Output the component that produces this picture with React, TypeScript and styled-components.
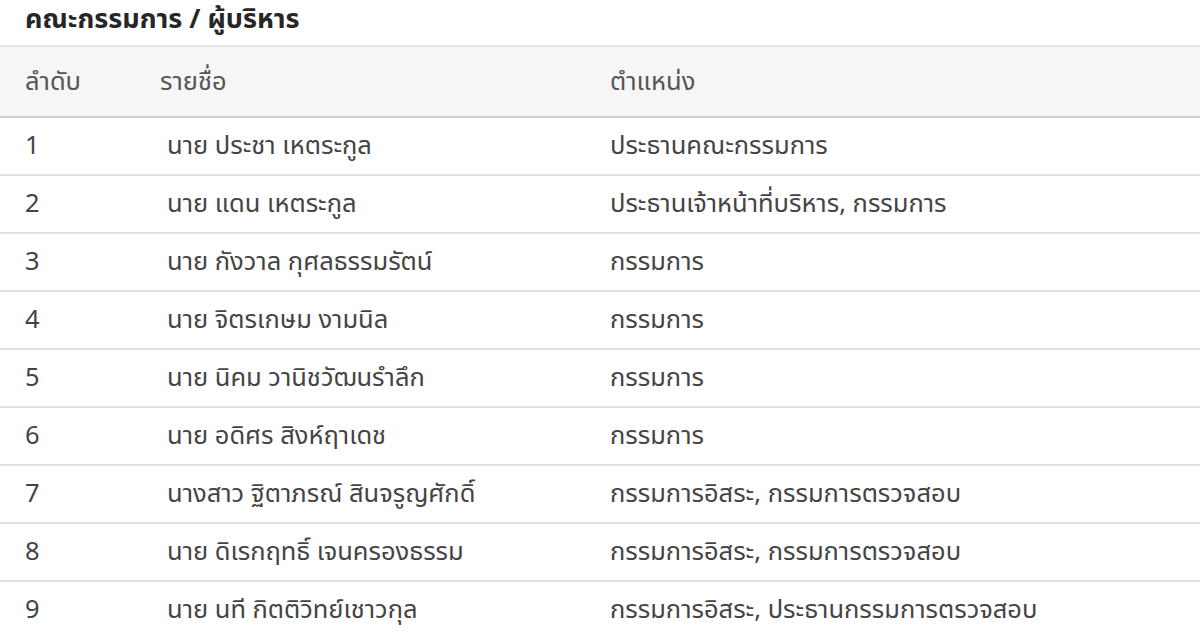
import styled, { createGlobalStyle } from 'styled-components';

interface Member {
  name: string;
  position: string;
}

const members: Member[] = [
  { name: 'นาย ประชา เหตระกูล', position: 'ประธานคณะกรรมการ' },
  { name: 'นาย แดน เหตระกูล', position: 'ประธานเจ้าหน้าที่บริหาร, กรรมการ' },
  { name: 'นาย กังวาล กุศลธรรมรัตน์', position: 'กรรมการ' },
  { name: 'นาย จิตรเกษม งามนิล', position: 'กรรมการ' },
  { name: 'นาย นิคม วานิชวัฒนรำลึก', position: 'กรรมการ' },
  { name: 'นาย อดิศร สิงห์ฤาเดช', position: 'กรรมการ' },
  { name: 'นางสาว ฐิตาภรณ์ สินจรูญศักดิ์', position: 'กรรมการอิสระ, กรรมการตรวจสอบ' },
  { name: 'นาย ดิเรกฤทธิ์ เจนครองธรรม', position: 'กรรมการอิสระ, กรรมการตรวจสอบ' },
  { name: 'นาย นที กิตติวิทย์เชาวกุล', position: 'กรรมการอิสระ, ประธานกรรมการตรวจสอบ' },
];

export default function App() {
  return (
    <>
      <GlobalStyle />
      <Page>
        <Title>คณะกรรมการ / ผู้บริหาร</Title>
        <Table>
          <thead>
            <tr>
              <Th $w={160}>ลำดับ</Th>
              <Th $w={450}>รายชื่อ</Th>
              <Th>ตำแหน่ง</Th>
            </tr>
          </thead>
          <tbody>
            {members.map((m, i) => (
              <tr key={m.name}>
                <Td>{i + 1}</Td>
                <Td className="name">{m.name}</Td>
                <Td>{m.position}</Td>
              </tr>
            ))}
          </tbody>
        </Table>
      </Page>
    </>
  );
}

// Styles
const GlobalStyle = createGlobalStyle`
  html, body {
    margin: 0;
    background: #fff;
    font-family: 'Noto Sans Thai', Tahoma, 'DejaVu Sans', 'Noto Sans', sans-serif;
  }
`;

const Page = styled.div`
  width: 1200px;
  overflow: hidden;
`;

const Title = styled.h2`
  margin: 0;
  height: 45px;
  box-sizing: border-box;
  padding: 5px 25px 0;
  font-size: 27px;
  font-weight: 700;
  line-height: 30px;
  color: #262626;
`;

const Table = styled.table`
  width: 100%;
  border-collapse: collapse;
`;

const Th = styled.th<{ $w?: number }>`
  ${({ $w }) => ($w ? `width: ${$w}px;` : '')}
  height: 71px;
  box-sizing: border-box;
  padding: 0 0 0 25px;
  text-align: left;
  font-size: 25.5px;
  font-weight: 400;
  color: #555;
  background: #f6f6f6;
  border-top: 2px solid #e4e4e4;
  border-bottom: 2px solid #cfcfcf;
  &:nth-child(2),
  &:nth-child(3) {
    padding-left: 0;
  }
`;

const Td = styled.td`
  height: 58px;
  box-sizing: border-box;
  padding: 0 0 0 25px;
  font-size: 25.5px;
  color: #444;
  border-bottom: 2px solid #e2e2e2;
  &.name {
    padding-left: 7px;
  }
  &:nth-child(3) {
    padding-left: 0;
  }
`;
